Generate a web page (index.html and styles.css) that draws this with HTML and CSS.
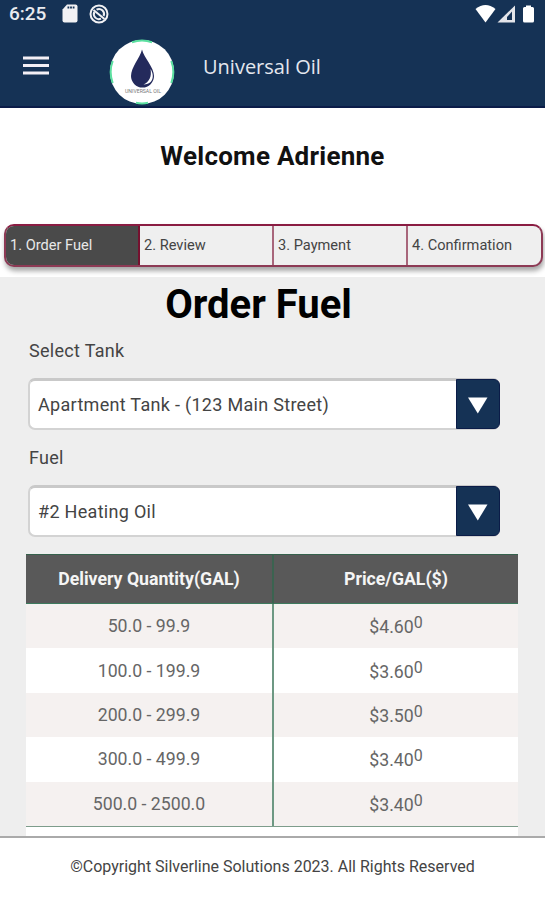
FILE: index.html
```html
<!DOCTYPE html>
<html lang="en">
<head>
<meta charset="UTF-8">
<meta name="viewport" content="width=device-width, initial-scale=1.0">
<title>Universal Oil</title>
<link rel="stylesheet" href="styles.css">
</head>
<body>
<header class="header">
    <div class="statusbar">
        <span class="time">6:25</span>
        <svg class="sdcard" width="16" height="19" viewBox="0 0 16 19">
            <path d="M5 0.500H13.500Q15.500 0.500 15.500 2.500V16.500Q15.500 18.500 13.500 18.500H2.500Q0.500 18.500 0.500 16.500V5.500Z" fill="#f1f1f4"/>
            <path d="M5.500 3.500H12.500" stroke="#153255" stroke-width="2" stroke-dasharray="1.800 .8"/>
        </svg>
        <svg class="nosync" width="20" height="20" viewBox="0 0 20 20" fill="none" stroke="#f1f1f4">
            <circle cx="10" cy="10" r="8.500" stroke-width="2"/>
            <path d="M14.600 12A5 5 0 0 0 7.500 5.700M5.300 8A5 5 0 0 0 12 14.600" stroke-width="2"/>
            <path d="M4.500 6L15.500 15" stroke-width="2"/>
        </svg>
        <svg class="signals" width="62" height="20" viewBox="0 0 62 20">
            <path d="M0.500 5Q10.500 -3 20.500 5L10.500 18.500Z" fill="#fff"/>
            <path d="M40 1.500V18.500H22.500Z" fill="#e4e5ea"/>
            <path d="M37 7.500V16H32V13Z" fill="#153255"/>
            <path d="M51 1.500H56V3H57.500Q59 3 59 4.500V17Q59 18.500 57.500 18.500H49.500Q48 18.500 48 17V4.500Q48 3 49.500 3H51Z" fill="#fff"/>
        </svg>
    </div>
    <div class="navbar">
        <svg class="menu" width="26" height="20" viewBox="0 0 26 20">
            <path d="M0 2H26M0 9.500H26M0 17H26" stroke="#f3eff6" stroke-width="3"/>
        </svg>
        <svg class="logo" width="66" height="66" viewBox="0 0 66 66">
            <circle cx="33" cy="33" r="32" fill="#fff"/>
            <path d="M23 3.200A31.500 31.500 0 0 1 43 3.200M62.300 22A31.500 31.500 0 0 1 62.300 44M3.700 44A31.500 31.500 0 0 1 3.700 22M27 63.800A31.500 31.500 0 0 0 39 63.800" fill="none" stroke="#5be0a0" stroke-width="2"/>
            <path d="M33 10.500C31 19 22 28 22 37A11.500 11.500 0 0 0 45 37C45 28 35 19 33 10.500Z" fill="#242a5c"/>
            <path d="M41.500 30C43 38 40 43 34.500 45.500C41 45.500 43.800 41.500 43.800 37C43.800 34 42.800 32 41.500 30Z" fill="#fff"/>
            <text x="34" y="53.500" text-anchor="middle" textLength="36" lengthAdjust="spacingAndGlyphs">UNIVERSAL OIL</text>
        </svg>
        <span class="brand">Universal Oil</span>
    </div>
</header>
<h2 class="welcome">Welcome Adrienne</h2>
<ol class="steps">
    <li class="active">1. Order Fuel</li>
    <li>2. Review</li>
    <li>3. Payment</li>
    <li>4. Confirmation</li>
</ol>
<main class="order">
    <h1>Order Fuel</h1>
    <div class="field">
        <div class="label">Select Tank</div>
        <div class="select">
            <span class="value">Apartment Tank - (123 Main Street)</span>
            <span class="arrow"><svg width="20" height="17" viewBox="0 0 20 17"><path d="M0 0.500H19.500L9.800 16.500Z" fill="#fff"/></svg></span>
        </div>
    </div>
    <div class="field">
        <div class="label">Fuel</div>
        <div class="select">
            <span class="value">#2 Heating Oil</span>
            <span class="arrow"><svg width="20" height="17" viewBox="0 0 20 17"><path d="M0 0.500H19.500L9.800 16.500Z" fill="#fff"/></svg></span>
        </div>
    </div>
    <div class="prices">
        <table>
            <thead>
                <tr><th>Delivery Quantity(GAL)</th><th>Price/GAL($)</th></tr>
            </thead>
            <tbody>
                <tr><td>50.0 - 99.9</td><td class="price">$4.60<sup>0</sup></td></tr>
                <tr><td>100.0 - 199.9</td><td class="price">$3.60<sup>0</sup></td></tr>
                <tr><td>200.0 - 299.9</td><td class="price">$3.50<sup>0</sup></td></tr>
                <tr><td>300.0 - 499.9</td><td class="price">$3.40<sup>0</sup></td></tr>
                <tr><td>500.0 - 2500.0</td><td class="price">$3.40<sup>0</sup></td></tr>
            </tbody>
        </table>
    </div>
</main>
<footer class="footer">©Copyright Silverline Solutions 2023. All Rights Reserved</footer>
</body>
</html>
```
FILE: styles.css
```css
* {
    box-sizing: border-box;
}
body {
    margin: 0;
    height: 900px;
    display: flex;
    flex-direction: column;
    overflow: hidden;
    background-color: #fff;
    color: #444;
    font-family: Roboto, "Liberation Sans", sans-serif;
}
svg {
    display: block;
    flex: none;
}
.header {
    height: 108px;
    background-color: #153255;
    border-bottom: 2px solid #0b1c48;
}
.statusbar {
    display: flex;
    align-items: center;
    height: 27px;
    padding: 0 8px 0 9px;
}
.time {
    width: 53px;
    font-size: 19px;
    font-weight: 500;
    color: #e9ebf0;
}
.nosync {
    margin-left: 11px;
}
.signals {
    margin-left: auto;
}
.navbar {
    display: flex;
    align-items: center;
    height: 78px;
    padding-left: 23px;
}
.logo {
    margin: 11px 28px 0 60px;
}
.logo text {
    font: 6px Roboto, sans-serif;
    fill: #777;
}
.brand {
    font-family: "Open Sans", sans-serif;
    font-size: 20px;
    color: #e4e7ee;
}
.welcome {
    height: 116px;
    margin: 0;
    line-height: 96px;
    text-align: center;
    font-size: 26px;
    font-weight: 700;
    letter-spacing: 0.25px;
    color: #111;
}
.steps {
    display: grid;
    grid-template-columns: 134px 134px 134px 1fr;
    height: 43px;
    margin: 0 2px 10px 4px;
    padding: 0;
    list-style: none;
    overflow: hidden;
    border: 2px solid #8d3a55;
    border-top-color: #8a1c42;
    border-radius: 10px;
    background-color: #efefef;
    box-shadow: 1px 4px 5px rgba(0, 0, 0, 0.35);
    flex: none;
}
.steps li {
    padding-left: 4px;
    line-height: 39px;
    font-size: 14.6px;
    border-right: 2px solid #a8667b;
}
.steps li:last-child {
    border-right: none;
}
.steps .active {
    background-color: #4a4a4a;
    border-right-color: #75112f;
    color: #e8e8e8;
}
.order {
    flex: 1;
    min-height: 0;
    background-color: #eee;
}
h1 {
    margin: 0;
    height: 56px;
    line-height: 56px;
    text-align: center;
    padding-right: 28px;
    font-size: 40px;
    font-weight: 700;
    color: #000;
}
.field {
    width: 472px;
    height: 107px;
    margin-left: 28px;
}
.label {
    height: 45px;
    padding-left: 1px;
    line-height: 36px;
    font-size: 18px;
    letter-spacing: 0.3px;
}
.select {
    display: flex;
    height: 52px;
    border: 2px solid #d3d3d3;
    border-top: 3px solid #c9c9c9;
    border-right: none;
    border-radius: 7px;
    background-color: #fff;
}
.value {
    flex: 1;
    padding-left: 8px;
    line-height: 48px;
    font-size: 18px;
    letter-spacing: 0.3px;
}
.arrow {
    display: flex;
    justify-content: center;
    align-items: center;
    width: 44px;
    margin: -2px 0 -1px;
    padding-top: 2px;
    background-color: #153255;
    border: 1px solid #0b1c48;
    border-radius: 0 6px 6px 0;
}
.prices {
    width: 492px;
    height: 290px;
    margin: 7px 0 0 26px;
    background-color: #fff;
}
table {
    width: 100%;
    border-collapse: separate;
    border-spacing: 0;
    table-layout: fixed;
    border-bottom: 1px solid #7d9c8b;
}
th,
td {
    padding: 0;
    text-align: center;
}
th:first-child,
td:first-child {
    width: 248px;
    border-right: 2px solid #6d9883;
}
th {
    height: 50px;
    font-size: 17.7px;
    color: #f5f5f5;
    background-color: #595959;
    border-top: 1px solid #35614c;
    border-bottom: 1px solid #3d7a5e;
}
th:first-child {
    border-right-color: #3b6350;
}
td {
    height: 44.4px;
    font-size: 17.7px;
    color: #666;
    line-height: 20px;
}
.price {
    padding-top: 2px;
}
tbody tr:nth-child(odd) {
    background-color: #f5f1f0;
}
sup {
    font-size: 16px;
    line-height: 0;
    vertical-align: 5px;
}
.footer {
    height: 64px;
    flex: none;
    border-top: 2px solid #aaa;
    background-color: #fff;
    text-align: center;
    line-height: 58px;
    font-size: 16px;
}
```
